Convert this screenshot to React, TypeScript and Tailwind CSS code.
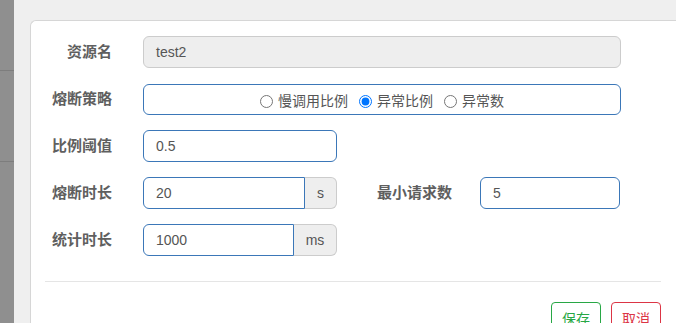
import React from "react";

const font = { fontFamily: '"Liberation Sans", "Noto Sans CJK SC", Arial, sans-serif' };

function Label({ children, w = "w-[67px]" }: { children: React.ReactNode; w?: string }) {
  return (
    <div className={`${w} shrink-0 text-right text-[15px] font-bold text-[#5f5f5f] leading-[32px]`}>{children}</div>
  );
}

function Radio({ label, checked }: { label: string; checked?: boolean }) {
  return (
    <label className="flex items-center gap-[5px] text-[14px] text-[#555]">
      <input type="radio" name="strategy" defaultChecked={checked} className="m-0 w-[13px] h-[13px]" />
      <span>{label}</span>
    </label>
  );
}

export default function App() {
  return (
    <div style={font} className="w-[676px] h-[323px] flex overflow-hidden bg-[#efefef]">
      <div className="w-[14px] shrink-0 flex flex-col bg-[#8f8f8f]">
        <div className="h-[71px] border-b border-[#7d7d7d]" />
        <div className="h-[91px] border-b border-[#7d7d7d]" />
        <div className="flex-1" />
      </div>
      <div className="flex-1 pt-[20px] pl-[16px]">
        <div className="h-full bg-white border-t border-l border-[#d6d6d6] rounded-tl-[6px] pl-[14px] pr-[15px] pt-[15px]">
          <div className="flex flex-col gap-[15px]">
            <div className="flex h-[32px] items-center">
              <Label>资源名</Label>
              <div className="ml-[31px] w-[478px] h-[32px] bg-[#eeeeee] border border-[#cccccc] rounded-[6px] px-[12px] text-[14px] text-[#555] leading-[30px]">
                test2
              </div>
            </div>
            <div className="flex h-[32px] items-center">
              <Label>熔断策略</Label>
              <div className="ml-[31px] w-[478px] h-[31px] border border-[#3b77b8] rounded-[6px] flex items-center justify-center gap-[11px] pt-[5px]">
                <Radio label="慢调用比例" />
                <Radio label="异常比例" checked />
                <Radio label="异常数" />
              </div>
            </div>
            <div className="flex h-[32px] items-center">
              <Label>比例阈值</Label>
              <div className="ml-[31px] w-[194px] h-[32px] border border-[#3b77b8] rounded-[6px] px-[12px] text-[14px] text-[#555] leading-[30px]">
                0.5
              </div>
            </div>
            <div className="flex h-[32px] items-center">
              <Label>熔断时长</Label>
              <div className="ml-[31px] w-[194px] h-[32px] flex">
                <div className="flex-1 border border-[#3b77b8] rounded-l-[6px] px-[12px] text-[14px] text-[#555] leading-[30px]">20</div>
                <div className="w-[32px] bg-[#eeeeee] border border-l-0 border-[#cccccc] rounded-r-[6px] text-center text-[14px] text-[#555] leading-[30px]">s</div>
              </div>
              <div className="ml-[40px] text-[15px] font-bold text-[#5f5f5f] leading-[32px]">最小请求数</div>
              <div className="ml-[28px] w-[140px] h-[32px] border border-[#3b77b8] rounded-[6px] px-[12px] text-[14px] text-[#555] leading-[30px]">
                5
              </div>
            </div>
            <div className="flex h-[32px] items-center">
              <Label>统计时长</Label>
              <div className="ml-[31px] w-[194px] h-[32px] flex">
                <div className="flex-1 border border-[#3b77b8] rounded-l-[6px] px-[12px] text-[14px] text-[#555] leading-[30px]">1000</div>
                <div className="w-[43px] bg-[#eeeeee] border border-l-0 border-[#cccccc] rounded-r-[6px] text-center text-[14px] text-[#555] leading-[30px]">ms</div>
              </div>
            </div>
          </div>
          <div className="mt-[25px] h-px bg-[#e5e5e5]" />
          <div className="mt-[20px] flex justify-end gap-[10px]">
            <button className="h-[34px] px-[10px] border border-[#28a745] text-[#28a745] rounded-[4px] text-[14px] bg-white">保存</button>
            <button className="h-[34px] px-[10px] border border-[#dc3545] text-[#dc3545] rounded-[4px] text-[14px] bg-white">取消</button>
          </div>
        </div>
      </div>
    </div>
  );
}
